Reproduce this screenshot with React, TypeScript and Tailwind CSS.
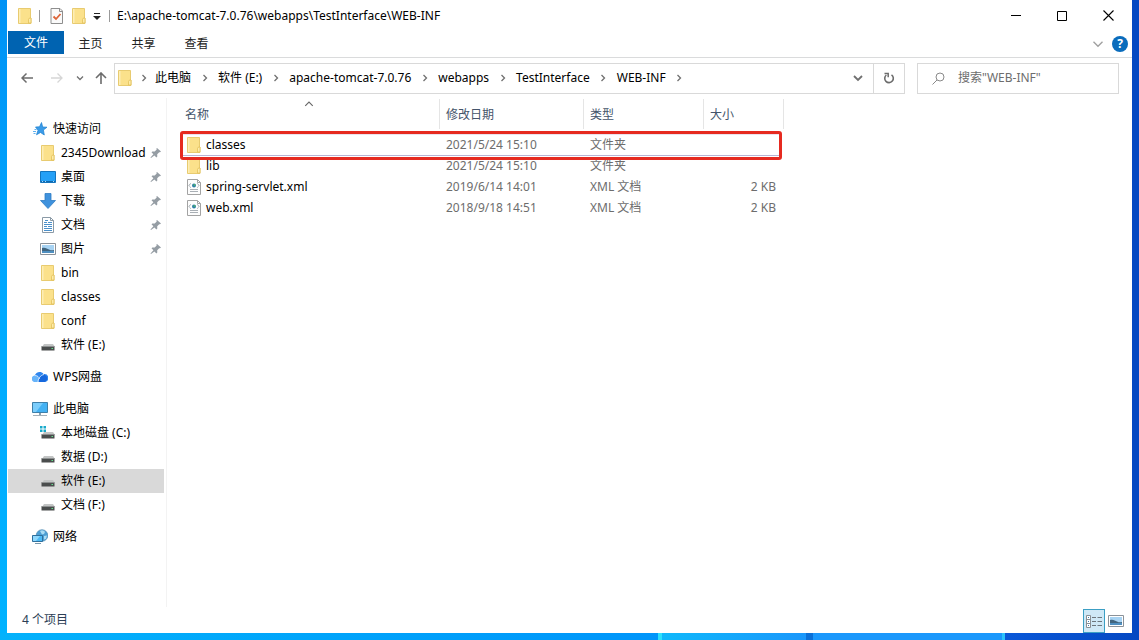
import type { ReactNode } from "react";
import clsx from "clsx";

// --- ICONS ---

function FolderIcon() {
  return (
    <svg width="14" height="16" viewBox="0 0 14 16" className="shrink-0">
      <path d="M.5 .5h12v9.500h.500v5.500H.5z" fill="#fbe18b" stroke="#e8cb70" />
      <path d="M1 1h1.500v14H1z" fill="#fdeeb5" />
      <path d="M10.500 15V11.500l1-1.500h1.500v5z" fill="#fdeca9" stroke="#e0bb52" strokeWidth=".7" />
    </svg>
  );
}

function CheckDocIcon() {
  return (
    <svg width="14" height="16" viewBox="0 0 14 16" className="shrink-0">
      <path d="M1 .5h9L12.500 3v12.500H1z" fill="#fafafa" stroke="#8e8e8e" />
      <path d="M9.500 .5v3h3" fill="none" stroke="#8e8e8e" />
      <path d="M3.500 8.500l2.500 2.500 4.500-5" fill="none" stroke="#dd6438" strokeWidth="1.800" />
    </svg>
  );
}

function XmlIcon() {
  return (
    <svg width="14" height="16" viewBox="0 0 14 16" className="shrink-0">
      <path d="M.5 .5h10l3 3v12H.5z" fill="#fdfdfd" stroke="#a3a3a3" />
      <path d="M10.500 .5v3h3" fill="none" stroke="#a3a3a3" />
      <path d="M3.500 4.500L2 6.500l1.500 2M10.500 4.500L12 6.500l-1.500 2" fill="none" stroke="#7b868f" strokeDasharray="1.500 .7" />
      <circle cx="7" cy="6.500" r="2" fill="#2c7fa8" />
      <circle cx="7.500" cy="6" r="1" fill="#4fb06d" />
      <path d="M3 10.500h8M3 12.500h8" stroke="#a9afb5" />
    </svg>
  );
}

function StarIcon() {
  return (
    <svg width="16" height="16" viewBox="0 0 16 16" className="shrink-0">
      <path d="M9.500 1.500l1.200 4.500 4.300.2-3.600 2.800.9 5-3.800-2.500-4 2.300 1.500-4.500L3.500 6 7.500 5.800z" fill="#3a9be8" stroke="#1c7fd0" strokeWidth=".7" />
      <path d="M1 10.500h3M1.500 12.500h2M2.500 8.500h2" stroke="#5fb0ef" />
    </svg>
  );
}

function DesktopIcon() {
  return (
    <svg width="16" height="16" viewBox="0 0 16 16" className="shrink-0">
      <path d="M.5 2.500h15v11H.5z" fill="#25a0f6" stroke="#1474bd" />
      <path d="M1 12.500h14" stroke="#0f68ab" />
      <path d="M2 12.500h1M5 12.500h1M13 12.500h1" stroke="#a9dcff" />
    </svg>
  );
}

function DownloadIcon() {
  return (
    <svg width="16" height="16" viewBox="0 0 16 16" className="shrink-0">
      <path d="M5 .5h6v7h4.500L8 15.500.5 7.500H5z" fill="#3f92dd" stroke="#2f7cc4" strokeWidth=".8" />
    </svg>
  );
}

function DocumentIcon() {
  return (
    <svg width="16" height="16" viewBox="0 0 16 16" className="shrink-0">
      <path d="M2.500 .5h8l3 3v12h-11z" fill="#fff" stroke="#8b9aa6" />
      <path d="M10.500 .5v3h3" fill="none" stroke="#8b9aa6" />
      <path d="M4 5.500h3M8 5.500h4M4 7.500h8M4 9.500h3M8 9.500h4M4 11.500h8M4 13.500h8M5 3.500h3" stroke="#4a90cb" />
    </svg>
  );
}

function PictureIcon() {
  return (
    <svg width="16" height="12" viewBox="0 0 16 12" className="shrink-0">
      <path d="M.5 .5h15v11H.5z" fill="#fff" stroke="#8b9299" />
      <path d="M2 2h12v8H2z" fill="#a7d3f3" />
      <path d="M2 5c3-1 5 .5 7 1.500s3 1 5 .5v3H2z" fill="#41657f" />
      <path d="M2 8h12v2H2z" fill="#4f8fc0" />
    </svg>
  );
}

function DriveIcon({ system = false }: { system?: boolean }) {
  return (
    <svg width="16" height="16" viewBox="0 0 16 16" className="shrink-0">
      {system && <path d="M0 1h2.500v2.500H0zM3.500 1H6v2.500H3.500zM0 4.500h2.500V7H0zM3.500 4.500H6V7H3.500z" fill="#18aacb" />}
      <path d="M4 7h9l2 3H2z" fill="#c3c5c5" />
      <path d="M1.500 9.500h13v4h-13z" fill="#4a4d4d" />
      <path d="M1.500 9.500h13" stroke="#8d9090" />
      <path d="M11.500 11.500h1.500" stroke="#63e08b" strokeWidth="1.200" />
    </svg>
  );
}

function CloudIcon() {
  return (
    <svg width="16" height="16" viewBox="0 0 16 16" className="shrink-0">
      <path d="M3 13A3.200 3.200 0 0 1 2.800 6.800C3.500 3 9 1.500 11.500 5a4 4 0 0 1 1.500 8z" fill="#2f86ee" />
      <path d="M3 13A3.200 3.200 0 0 1 3 6.500c3 0 4 2.500 5 6.500z" fill="#67b4fa" />
      <path d="M6.500 13c0-3 2-6.500 5.500-7.500a4 4 0 0 1 1 7.500z" fill="#1668dd" />
      <path d="M3 6.500c2.500 0 4 1.500 4.500 3.500M6 13c0-3 2.500-7 6-7.500" fill="none" stroke="#fff" strokeWidth=".7" />
    </svg>
  );
}

function ComputerIcon() {
  return (
    <svg width="16" height="16" viewBox="0 0 16 16" className="shrink-0">
      <path d="M.5 1.500h15v10H.5z" fill="#43b1f3" stroke="#3d7fa9" />
      <path d="M1 2h10L4 11H1z" fill="#7bcdfb" />
      <path d="M7 12h2v2H7z" fill="#8ba0ae" />
      <path d="M1 14.500h14" stroke="#a5b0b8" />
    </svg>
  );
}

function NetworkIcon() {
  return (
    <svg width="16" height="16" viewBox="0 0 16 16" className="shrink-0">
      <circle cx="10" cy="6.500" r="5.800" fill="#4c9fd4" stroke="#3a7ca9" strokeWidth=".6" />
      <path d="M8 2c2-1.500 4-.5 5 1l-1 2-2 .5zM12 7l3-.5-1 3.500-2 .5z" fill="#a8dcf4" />
      <path d="M.5 6.500h10v6H.5z" fill="#4dbaf5" stroke="#2e6f9c" />
      <path d="M1 7h7l-4 5H1z" fill="#8fd8fd" />
      <path d="M3 14.500h6" stroke="#7897ab" />
    </svg>
  );
}

function PinIcon() {
  return (
    <svg width="12" height="12" viewBox="0 0 12 12" className="mr-0.5 shrink-0">
      <path d="M7 1l4 3.500-1 .8-.8-.1-2 2.100.1 2.200-.9.900-2-2L1 11l-.5-.5 2.900-3.200-1.900-2 .9-.9 2.300.1 2-2.100-.300-.8z" fill="#959da4" />
    </svg>
  );
}

type ChevronProps = { dir: "right" | "down" | "up"; size?: number; className?: string };

function Chevron({ dir, size = 8, className }: ChevronProps) {
  const paths = { right: "M2.500 1l3 3-3 3", down: "M1 2.500l3 3 3-3", up: "M1 5.500l3-3 3 3" };
  return (
    <svg width={size} height={size} viewBox="0 0 8 8" className={className}>
      <path d={paths[dir]} fill="none" stroke="currentColor" strokeWidth={size > 8 ? 0.9 : 1.3} />
    </svg>
  );
}

// --- DATA ---

type SideItem = { label: string; icon: ReactNode; pinned?: boolean; active?: boolean };
type SideGroup = { label: string; icon: ReactNode; items: SideItem[] };

const groups: SideGroup[] = [
  {
    label: "快速访问",
    icon: <StarIcon />,
    items: [
      { label: "2345Download", icon: <FolderIcon />, pinned: true },
      { label: "桌面", icon: <DesktopIcon />, pinned: true },
      { label: "下载", icon: <DownloadIcon />, pinned: true },
      { label: "文档", icon: <DocumentIcon />, pinned: true },
      { label: "图片", icon: <PictureIcon />, pinned: true },
      { label: "bin", icon: <FolderIcon /> },
      { label: "classes", icon: <FolderIcon /> },
      { label: "conf", icon: <FolderIcon /> },
      { label: "软件 (E:)", icon: <DriveIcon /> },
    ],
  },
  { label: "WPS网盘", icon: <CloudIcon />, items: [] },
  {
    label: "此电脑",
    icon: <ComputerIcon />,
    items: [
      { label: "本地磁盘 (C:)", icon: <DriveIcon system /> },
      { label: "数据 (D:)", icon: <DriveIcon /> },
      { label: "软件 (E:)", icon: <DriveIcon />, active: true },
      { label: "文档 (F:)", icon: <DriveIcon /> },
    ],
  },
  { label: "网络", icon: <NetworkIcon />, items: [] },
];

const crumbs = ["此电脑", "软件 (E:)", "apache-tomcat-7.0.76", "webapps", "TestInterface", "WEB-INF"];

const files = [
  { name: "classes", date: "2021/5/24 15:10", type: "文件夹", size: "", folder: true },
  { name: "lib", date: "2021/5/24 15:10", type: "文件夹", size: "", folder: true },
  { name: "spring-servlet.xml", date: "2019/6/14 14:01", type: "XML 文档", size: "2 KB", folder: false },
  { name: "web.xml", date: "2018/9/18 14:51", type: "XML 文档", size: "2 KB", folder: false },
];

const columns = [
  { label: "名称", width: "w-[260px]", pad: "pl-[5px]" },
  { label: "修改日期", width: "w-36", pad: "pl-1.5" },
  { label: "类型", width: "w-[120px]", pad: "pl-1.5" },
  { label: "大小", width: "w-20", pad: "pl-1.5" },
];

// --- WINDOW PARTS ---

function TitleBar() {
  return (
    <header className="flex h-[31px] items-center">
      <div className="flex flex-1 items-center pl-[11px]">
        <FolderIcon />
        <span className="mr-2.5 ml-[7px] h-3 w-px bg-[#9a9a9a]" />
        <button aria-label="属性"><CheckDocIcon /></button>
        <button aria-label="新建文件夹" className="ml-2"><FolderIcon /></button>
        <button aria-label="自定义快速访问工具栏" className="ml-[7px]">
          <svg width="8" height="8" viewBox="0 0 8 8">
            <path d="M1 1.500h6" stroke="#222" />
            <path d="M0 4h8L4 8z" fill="#222" />
          </svg>
        </button>
        <span className="mr-[7px] ml-2 h-3 w-px bg-[#9a9a9a]" />
        <h1>E:\apache-tomcat-7.0.76\webapps\TestInterface\WEB-INF</h1>
      </div>
      <div className="flex pr-px">
        <button aria-label="最小化" className="flex h-[30px] w-[46px] items-center justify-center">
          <svg width="10" height="11" viewBox="0 0 10 11"><path d="M0 5.500h10" stroke="#000" /></svg>
        </button>
        <button aria-label="最大化" className="flex h-[30px] w-[46px] items-center justify-center">
          <svg width="10" height="10" viewBox="0 0 10 10"><path d="M.5 .5h9v9h-9z" fill="none" stroke="#000" /></svg>
        </button>
        <button aria-label="关闭" className="flex h-[30px] w-[46px] items-center justify-center">
          <svg width="11" height="11" viewBox="0 0 11 11"><path d="M.5 .5l10 10M10.500 .5l-10 10" stroke="#000" strokeWidth="1.100" /></svg>
        </button>
      </div>
    </header>
  );
}

function Ribbon() {
  return (
    <div className="flex h-[27px] items-start border-b border-[#dadbdc] pl-px">
      <button className="h-[23px] w-14 bg-[#0063b1] text-white">文件</button>
      {["主页", "共享", "查看"].map((tab) => (
        <button key={tab} className="h-[26px] w-[53px] text-[#222]">{tab}</button>
      ))}
      <div className="ml-auto flex h-[26px] items-center gap-2 pr-1">
        <button aria-label="展开功能区" className="text-[#a0a0a0]"><Chevron dir="down" size={12} /></button>
        <button aria-label="帮助" className="flex size-4 items-center justify-center rounded-full bg-[#0a6cbc] font-bold text-white">?</button>
      </div>
    </div>
  );
}

function AddressBar() {
  return (
    <div className="flex h-10 items-center pr-[13px] pl-[5px] text-[#707070]">
      <button aria-label="后退" className="flex w-[30px] justify-center">
        <svg width="12" height="12" viewBox="0 0 12 12"><path d="M12 6H1M5.500 1.500L1 6l4.500 4.500" fill="none" stroke="#6c6c6c" strokeWidth="1.500" /></svg>
      </button>
      <button aria-label="前进" className="flex w-[30px] justify-center">
        <svg width="12" height="12" viewBox="0 0 12 12"><path d="M0 6h11M6.500 1.500L11 6l-4.500 4.500" fill="none" stroke="#d6d6d6" strokeWidth="1.300" /></svg>
      </button>
      <button aria-label="最近位置" className="flex w-4 justify-center"><Chevron dir="down" /></button>
      <button aria-label="上移" className="flex w-[26px] justify-center">
        <svg width="12" height="12" viewBox="0 0 12 12"><path d="M6 12V1M1 6l5-5 5 5" fill="none" stroke="#6c6c6c" strokeWidth="1.600" /></svg>
      </button>
      <div className="flex h-[31px] min-w-0 flex-1 items-center border border-[#d9d9d9]">
        <nav aria-label="地址" className="flex flex-1 items-center pl-[3px] whitespace-nowrap">
          <FolderIcon />
          <span className="flex w-[23px] justify-center"><Chevron dir="right" /></span>
          {crumbs.map((c) => (
            <div key={c} className="flex items-center">
              <a href="#" className="text-black">{c}</a>
              <span className="flex w-[27px] justify-center"><Chevron dir="right" /></span>
            </div>
          ))}
        </nav>
        <button aria-label="历史记录" className="flex w-[30px] justify-center">
          <svg width="10" height="8" viewBox="0 0 10 8"><path d="M1 2l4 4 4-4" fill="none" stroke="#707070" strokeWidth="1.800" /></svg>
        </button>
        <button aria-label="刷新" className="flex h-full w-[31px] items-center justify-center border-l border-[#d9d9d9]">
          <svg width="12" height="12" viewBox="0 0 12 12">
            <path d="M8.500 2.800A4.300 4.300 0 1 1 3.300 3" fill="none" stroke="#6c6c6c" strokeWidth="1.600" />
            <path d="M1.500 1.500h3.700v3.700" fill="none" stroke="#6c6c6c" strokeWidth="1.500" />
          </svg>
        </button>
      </div>
      <label className="ml-3 flex h-[31px] w-[202px] items-center border border-[#d9d9d9] pl-3.5">
        <svg width="13" height="13" viewBox="0 0 13 13" className="shrink-0">
          <circle cx="8" cy="5" r="4" fill="none" stroke="#8a8a8a" />
          <path d="M5 8l-4.500 4.500" stroke="#8a8a8a" />
        </svg>
        <input type="search" aria-label="搜索" placeholder={'搜索"WEB-INF"'} className="ml-[13px] w-full min-w-0 outline-none placeholder:text-[#6d6d6d]" />
      </label>
    </div>
  );
}

function Sidebar() {
  return (
    <nav aria-label="导航窗格" className="flex w-40 shrink-0 flex-col gap-2 border-r border-[#f3f3f3] pt-[19px] pr-0.5 pl-px">
      {groups.map((group) => (
        <div key={group.label}>
          <a href="#" className="flex h-6 items-center gap-[5px] pl-6">
            {group.icon}
            {group.label}
          </a>
          {group.items.map((item) => (
            <a
              key={item.label}
              href="#"
              className={clsx("flex h-6 items-center gap-[5px] pl-8", item.active && "bg-[#d9d9d9]")}
            >
              <span className="flex w-4 shrink-0 justify-center">{item.icon}</span>
              <span className="min-w-0 flex-1 whitespace-nowrap">{item.label}</span>
              {item.pinned && <PinIcon />}
            </a>
          ))}
        </div>
      ))}
    </nav>
  );
}

function FileList() {
  return (
    <main className="min-w-0 flex-1 pt-px pl-[13px]">
      <div className="relative w-[604px]">
        <table className="w-full table-fixed text-left">
          <thead>
            <tr>
              {columns.map((col, i) => (
                <th key={col.label} className={clsx("h-[35px] p-0 align-top font-normal text-[#44546a]", col.width)}>
                  <button className={clsx("relative block h-[30px] w-full border-r border-[#e5e5e5] pt-0.5 text-left", col.pad)}>
                    {col.label}
                    {i === 0 && <Chevron dir="up" size={10} className="absolute top-0 left-[124px] text-[#666]" />}
                  </button>
                </th>
              ))}
            </tr>
          </thead>
          <tbody className="text-[#6d6d6d]">
            {files.map((file) => (
              <tr key={file.name} className="h-[21px]">
                <td className="p-0 pl-[7px]">
                  <a href="#" className="flex items-center gap-[5px] text-black">
                    {file.folder ? <FolderIcon /> : <XmlIcon />}
                    {file.name}
                  </a>
                </td>
                <td className="p-0 pl-1.5">{file.date}</td>
                <td className="p-0 pl-1.5">{file.type}</td>
                <td className="p-0 pr-2 text-right">{file.size}</td>
              </tr>
            ))}
          </tbody>
        </table>
        {/* callout around the first row */}
        <div className="pointer-events-none absolute top-8 right-0.5 left-0 h-[29px] rounded-[3px] border-3 border-[#e62a20]">
          <div className="h-[22px] border-y border-t-[#ece2ec] border-b-[#b8b4d4]" />
        </div>
      </div>
    </main>
  );
}

function StatusBar() {
  return (
    <footer className="flex h-[26px] items-end pr-[5px] pl-[15px] text-[#2c3e55]">
      <span className="flex-1 pb-[5px]">4 个项目</span>
      <button aria-label="详细信息" className="flex h-6 w-[22px] items-center justify-center border border-[#3c9fc4] bg-[#cfe8f6]">
        <svg width="16" height="13" viewBox="0 0 16 13">
          <path d="M.5 .5h4v12h-4zM.5 4.500h4M.5 8.500h4" fill="#fff" stroke="#8a8f94" />
          <path d="M6 2.500h4M11.500 2.500H16M6 6.500h4M11.500 6.500H16M6 10.500h4M11.500 10.500H16" stroke="#6d757c" />
          <path d="M2 2.500h1M2 6.500h1M2 10.500h1" stroke="#3d7fb3" />
        </svg>
      </button>
      <button aria-label="大缩略图" className="flex h-6 w-[22px] items-center justify-center">
        <PictureIcon />
      </button>
    </footer>
  );
}

export default function App() {
  return (
    <div className="flex min-h-screen flex-col bg-white font-['Noto_Sans','Noto_Sans_CJK_SC',sans-serif] text-xs leading-4 text-black">
      <div className="flex flex-1">
        <div className="w-[7px] shrink-0 bg-linear-to-b from-[#0092f5] via-[#00aaff] to-[#00b2ff]" />
        <div className="flex min-w-0 flex-1 flex-col">
          <TitleBar />
          <Ribbon />
          <AddressBar />
          <div className="flex flex-1">
            <Sidebar />
            <FileList />
          </div>
          <StatusBar />
        </div>
        <div className="w-[7px] shrink-0 bg-[#0548c2]" />
      </div>
      {/* strip of wallpaper under the window */}
      <div className="flex h-[7px]">
        <div className="w-[658px] bg-linear-to-r from-[#05b2fb] to-[#0095fa]" />
        <div className="w-1 bg-[#2ce0fb]" />
        <div className="w-[144px] bg-linear-to-r from-[#10b8fb] to-[#1a97fb]" />
        <div className="w-[7px] bg-[#0b70d8]" />
        <div className="w-[189px] bg-[#1b98fc]" />
        <div className="w-[3px] bg-[#2cc4fb]" />
        <div className="flex-1 bg-linear-to-r from-[#0a58d8] to-[#0548c2]" />
      </div>
    </div>
  );
}
